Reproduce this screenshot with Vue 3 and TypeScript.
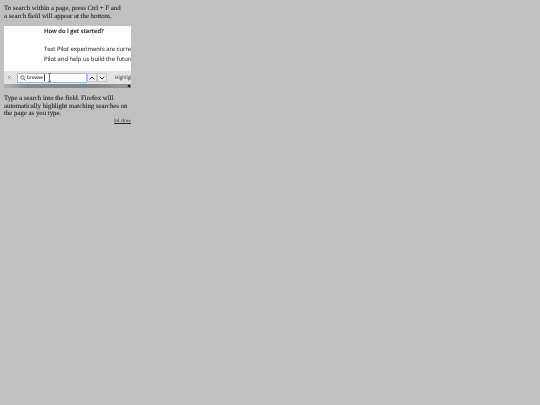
<script setup lang="ts">
</script>

<template>
  <main class="page">
    <p class="para top">To search within a page, press Ctrl + F and<br />a search field will appear at the bottom.</p>
    <div class="shot">
      <div class="content">
        <div class="heading">How do I get started?</div>
        <div class="line first">Test Pilot experiments are currently available</div>
        <div class="line">Pilot and help us build the future of Firefox</div>
      </div>
      <div class="toolbar">
        <svg class="close" width="5" height="5" viewBox="0 0 5 5"><path d="M.9.9l3.2 3.2M4.1.9L.9 4.1" stroke="#a0a0a0" stroke-width="1" /></svg>
        <div class="field">
          <svg class="glass" width="6" height="6" viewBox="0 0 6 6"><circle cx="2.4" cy="2.4" r="1.8" fill="none" stroke="#555" stroke-width=".8" /><path d="M3.8 3.8L5.6 5.6" stroke="#555" stroke-width=".9" /></svg>
          <span class="query">browse</span>
          <span class="caret"></span>
          <svg class="ibeam" width="5" height="9" viewBox="0 0 5 9"><path d="M1 .5h3M2.5.5v8M1 8.5h3" fill="none" stroke="#777" stroke-width="1" /></svg>
        </div>
        <div class="btn">
          <svg width="6" height="4" viewBox="0 0 6 4"><path d="M.7 3.3L3 1l2.3 2.3" fill="none" stroke="#333" stroke-width="1" /></svg>
        </div>
        <div class="btn">
          <svg width="6" height="4" viewBox="0 0 6 4"><path d="M.7.7L3 3l2.3-2.3" fill="none" stroke="#333" stroke-width="1" /></svg>
        </div>
        <span class="highlight">Highlight all</span>
      </div>
      <div class="shadow"><span class="dot"></span></div>
    </div>
    <p class="para bottom">Type a search into the field. Firefox will automatically highlight matching searches on the page as you type.</p>
    <a class="link">lol close</a>
  </main>
</template>

<style scoped>
.page {
  width: 127px;
  padding: 4px 0 0 4px;
  display: flex;
  flex-direction: column;
  font-family: "Liberation Serif", serif;
  color: #222;
  text-rendering: geometricPrecision;
  filter: blur(0.4px);
}
.para {
  margin: 0;
  font-size: 6.8px;
  line-height: 7.5px;
  -webkit-text-stroke: 0.08px #222;
}
.top {
  padding-top: 1px;
}
.shot {
  margin-top: 6px;
  height: 62px;
  display: flex;
  flex-direction: column;
  overflow: hidden;
  font-family: "Open Sans", sans-serif;
}
.content {
  height: 45px;
  background: #fff;
  padding: 0 0 0 40px;
  white-space: nowrap;
  overflow: hidden;
  color: #333;
  font-size: 5.85px;
  line-height: 10.5px;
  -webkit-text-stroke: 0.08px #333;
}
.heading {
  font-weight: 600;
  color: #222;
}
.line.first {
  margin-top: 7px;
}
.toolbar {
  height: 13px;
  background: #e2e2e2;
  display: flex;
  align-items: center;
  white-space: nowrap;
  overflow: hidden;
}
.close {
  flex: none;
  margin-left: 3px;
}
.field {
  margin-left: 5px;
  width: 70px;
  height: 10px;
  box-sizing: border-box;
  flex: none;
  background: #fff;
  border: 1px solid #9dbbdc;
  display: flex;
  align-items: center;
  padding-left: 2px;
  gap: 1px;
}
.query {
  font-size: 4.6px;
  color: #222;
  line-height: 8px;
  -webkit-text-stroke: 0.08px #222;
}
.caret {
  width: 1px;
  height: 7px;
  background: #444;
}
.ibeam {
  flex: none;
  margin-left: 1px;
}
.btn {
  flex: none;
  width: 10px;
  height: 9px;
  box-sizing: border-box;
  background: #ececec;
  border: 1px solid #c8c8c8;
  display: flex;
  align-items: center;
  justify-content: center;
}
.highlight {
  margin-left: 8px;
  font-size: 4.8px;
  color: #333;
}
.shadow {
  height: 4px;
  position: relative;
  background: linear-gradient(to right, #b4b4b4, #8a8a8a 18%, #868686 70%, #989898 95%, #777);
}
.dot {
  position: absolute;
  right: 1px;
  top: 1px;
  width: 2px;
  height: 2px;
  background: #222;
}
.bottom {
  margin-top: 7px;
}
.link {
  align-self: flex-end;
  font-size: 5px;
  line-height: 7px;
  color: #222;
  text-decoration: underline;
}
</style>

<style>
html, body {
  margin: 0;
  background: #c0c0c0;
  min-height: 405px;
}
</style>
